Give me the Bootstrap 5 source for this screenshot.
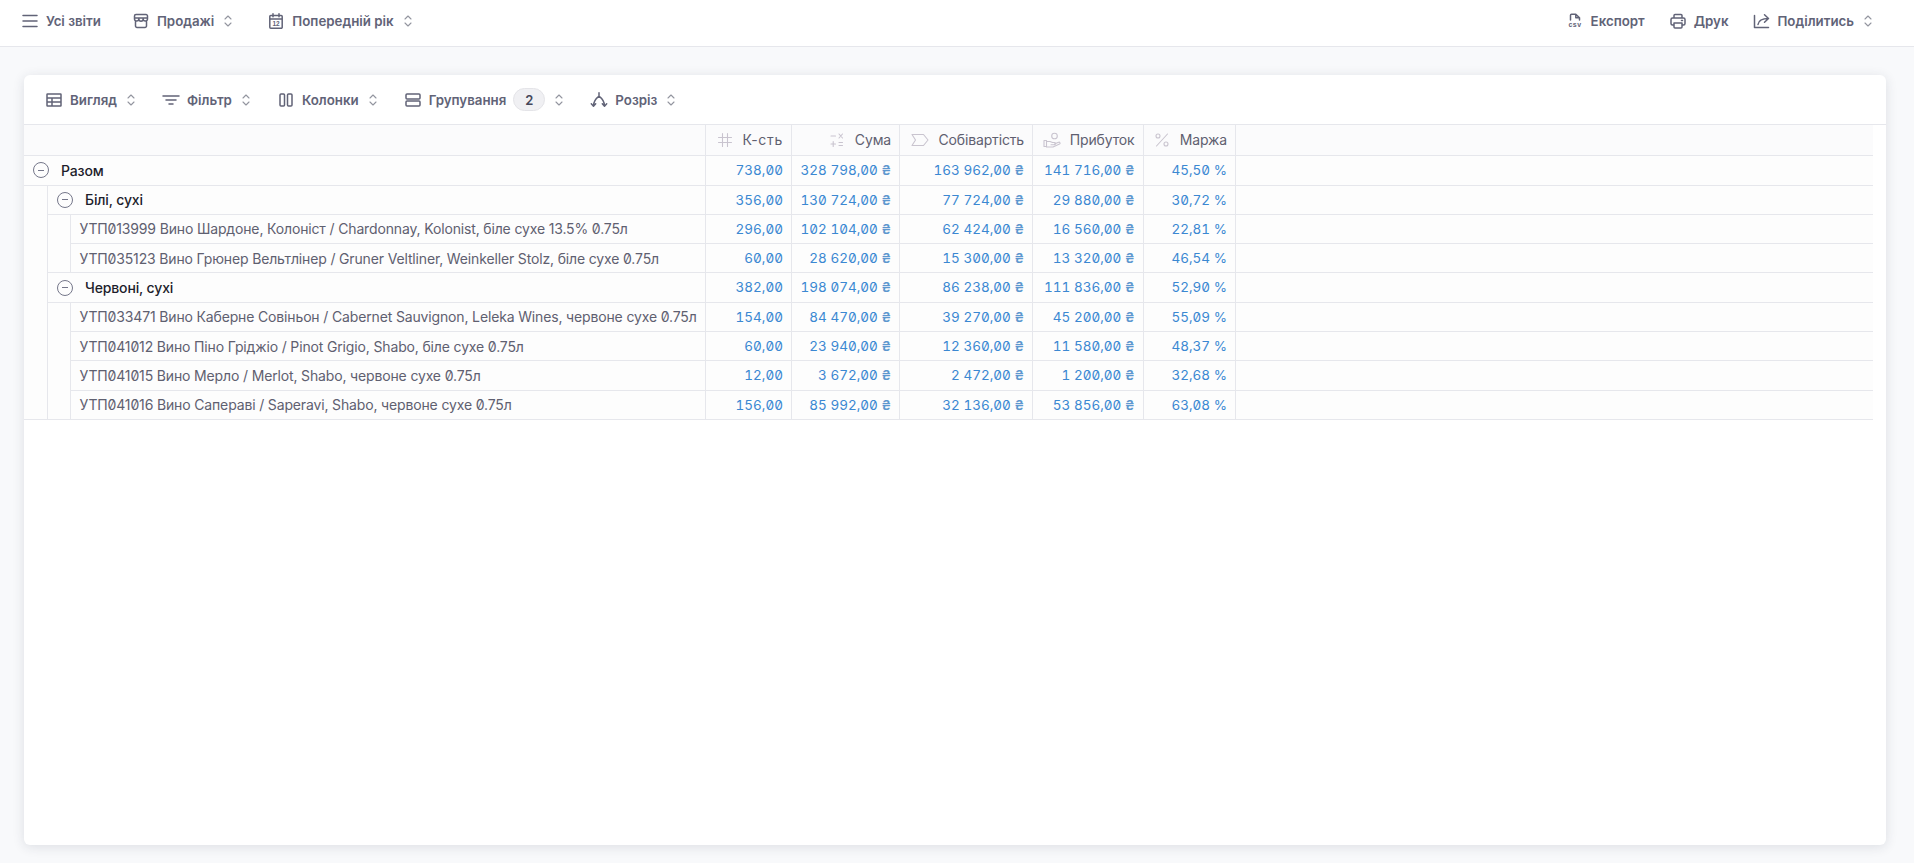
<!DOCTYPE html>
<html lang="uk">
<head>
    <meta charset="UTF-8">
    <title>Звіти</title>
    <link href="https://cdn.jsdelivr.net/npm/bootstrap@5.3.0/dist/css/bootstrap.min.css" rel="stylesheet">
    <style>
        body { background: #f8f9fb; font-family: Inter, "Liberation Sans", sans-serif; height: 863px; overflow: hidden; color: #5b5d70; }
        .top-strip { height: 47px; background: #fff; border-bottom: 1px solid #e6e7ec; padding: 0 42px 5px 21px; }
        .tool-btn { font-size: 13.3px; font-weight: 600; color: #616377; line-height: 18px; white-space: nowrap; }
        .tool-btn svg.ico { width: 18px; height: 18px; margin-right: 7px; flex: none; }
        .tool-btn svg.updown { width: 8px; height: 14px; margin-left: 10px; flex: none; color: #93959f; }
        .ico { fill: none; stroke: currentColor; stroke-width: 1.5; stroke-linecap: round; stroke-linejoin: round; }
        .ico text { fill: currentColor; stroke: none; font-family: "Liberation Sans", sans-serif; font-weight: 700; }
        .updown { fill: none; stroke: currentColor; stroke-width: 1.1; stroke-linecap: round; stroke-linejoin: round; }
        .gap-text { margin-left: 31px; }
        .gap-chevron { margin-left: 35px; }
        .gap-right { margin-left: 24px; }
        .gap-tools { margin-left: 27px; }
        .report-box { margin: 28px 28px 18px 24px; height: 770px; background: #fff; border-radius: 6px; box-shadow: 0 2px 12px rgba(40, 44, 70, .13); }
        .report-tools { height: 50px; border-bottom: 1px solid #e6e7ec; padding: 0 21px; }
        .count-pill { width: 32px; height: 23px; border-radius: 12px; background: #f0f0f3; border: 1px solid #e4e4e8; font-size: 13px; font-weight: 600; color: #45475a; margin-left: 7px; }
        .report-wrap { padding-right: 13px; }
        table.pivot { table-layout: fixed; width: 100%; border-collapse: collapse; font-size: 14px; letter-spacing: -.15px; color: #5f6070; }
        .pivot th, .pivot td { height: 29.3px; padding: 0 8px; border: 1px solid #e6e7ec; background: #fdfdfd; white-space: nowrap; font-weight: 400; vertical-align: middle; }
        .pivot tr > :first-child { border-left: 0; }
        .pivot tr > :last-child { border-right: 0; }
        .pivot thead tr > * { border-top: 0; height: 30px; background: #fbfbfc; }
        .pivot tr.total-row > * { height: 30px; }
        .pivot .num { text-align: right; color: #3b88d2; font-size: 13.5px; letter-spacing: 0; font-feature-settings: "tnum", "zero"; }
        .pivot .uah { font-weight: 600; color: #5d97cf; }
        .pivot .head-cell { text-align: right; color: #5f6070; }
        .pivot .head-in { display: flex; align-items: center; justify-content: flex-end; gap: 9px; }
        .pivot .head-in svg { width: 18px; height: 18px; color: #c9c4cf; flex: none; stroke-width: 1.1; }
        .pivot .wide-label { letter-spacing: .7px; }
        .pivot .group-name { font-weight: 500; color: #1d1e2c; padding-left: 9px; }
        .pivot .leaf-name { padding-left: 9px; font-feature-settings: "zero"; }
        .minus-dot { width: 16px; height: 16px; border-radius: 50%; border: 1px solid #75778a; margin-right: 12px; flex: none; }
        .minus-dot::after { content: ""; width: 6px; height: 1px; background: #75778a; }
    </style>
</head>
<body>

<svg width="0" height="0" class="d-block position-absolute">
    <symbol id="i-menu" viewBox="0 0 18 18"><path d="M2 3.500h14M2 9h14M2 14.500h14"/></symbol>
    <symbol id="i-store" viewBox="0 0 18 18"><path d="M4 2.500h10a1.500 1.500 0 0 1 1.500 1.500v2h-13V4A1.500 1.500 0 0 1 4 2.500zM2.500 6v1a2.170 2.170 0 0 0 4.330 0V6v1a2.170 2.170 0 0 0 4.340 0V6v1a2.170 2.170 0 0 0 4.330 0V6M3.500 9.500V14a1.500 1.500 0 0 0 1.500 1.500h8a1.500 1.500 0 0 0 1.500-1.500V9.500"/></symbol>
    <symbol id="i-print" viewBox="0 0 18 18"><path d="M5 13H3.500A1.500 1.500 0 0 1 2 11.500v-4A1.500 1.500 0 0 1 3.500 6h11A1.500 1.500 0 0 1 16 7.500v4a1.500 1.500 0 0 1-1.500 1.500H13M5 6V3.500a1 1 0 0 1 1-1h6a1 1 0 0 1 1 1V6M5 11h8v4a1 1 0 0 1-1 1H6a1 1 0 0 1-1-1zM12.500 8.500h1"/></symbol>
    <symbol id="i-share" viewBox="0 0 18 18"><path d="M2.500 3.500v12h14M6 12.500c.5-3.700 3.500-6 10.500-6M12.500 2.800l4 3.700-4 3.700"/></symbol>
    <symbol id="i-table" viewBox="0 0 18 18"><path d="M2.500 3h13a.5.5 0 0 1 .5.500v11a.5.5 0 0 1-.5.500h-13a.5.5 0 0 1-.5-.5v-11a.5.5 0 0 1 .5-.5zM2 7h14M2 11h14M7 7v8"/></symbol>
    <symbol id="i-filter" viewBox="0 0 18 18"><path d="M1 5h16M4 9h10M7 13h4"/></symbol>
    <symbol id="i-cols" viewBox="0 0 18 18"><rect x="3" y="3" width="4.500" height="12" rx="1"/><rect x="10.500" y="3" width="4.500" height="12" rx="1"/></symbol>
    <symbol id="i-rows" viewBox="0 0 18 18"><rect x="2" y="3" width="14" height="5" rx="1"/><rect x="2" y="10" width="14" height="5" rx="1"/></symbol>
    <symbol id="i-split" viewBox="0 0 18 18"><path d="M9 1.800v3.400M9 5.200C6 7.500 3.500 10 3.500 15M9 5.200c3 2.300 5.500 4.800 5.500 9.800M1.300 12.700l2.200 2.500 2.200-2.500M12.300 12.700l2.200 2.500 2.200-2.500"/></symbol>
    <symbol id="i-updown" viewBox="0 0 8 14"><path d="M1 5l3-3 3 3M1 9l3 3 3-3"/></symbol>
    <symbol id="h-hash" viewBox="0 0 18 18"><path d="M2.500 6.500h13M2.500 11.500h13M6.500 2.500v13M11.500 2.500v13"/></symbol>
    <symbol id="h-calc" viewBox="0 0 18 18"><path d="M3 5h4.500M11 3l3.500 4M14.500 3L11 7M5.200 10.500v5M3 13h4.500M11 11.500h3.500M11 14.500h3.500"/></symbol>
    <symbol id="h-tag" viewBox="0 0 18 18"><path d="M1 3.500h11.500l4.500 5.500-4.500 5.500H1l3.500-5.500z"/></symbol>
    <symbol id="h-hand" viewBox="0 0 18 18"><circle cx="11.500" cy="5" r="2.800"/><path d="M1 9.500h2.500v6H1zM3.500 10.500h3.500l2.500 1h2a1 1 0 0 1 0 2.200H8M11.500 13l4-1.700a1 1 0 0 1 1 1.800L10 16H3.500"/></symbol>
    <symbol id="h-pct" viewBox="0 0 18 18"><path d="M14.500 3L3.500 15"/><circle cx="5" cy="5" r="2"/><circle cx="13" cy="13" r="2"/></symbol>
</svg>

<div class="top-strip d-flex align-items-center justify-content-between">
    <div class="d-flex align-items-center">
        <div class="tool-btn d-flex align-items-center"><svg class="ico"><use href="#i-menu"/></svg>Усі звіти</div>
        <div class="tool-btn d-flex align-items-center gap-text"><svg class="ico"><use href="#i-store"/></svg>Продажі<svg class="updown"><use href="#i-updown"/></svg></div>
        <div class="tool-btn d-flex align-items-center gap-chevron">
            <svg class="ico" viewBox="0 0 18 18"><path d="M3.800 3.500h10.400a1 1 0 0 1 1 1v10.700a1 1 0 0 1-1 1H3.800a1 1 0 0 1-1-1V4.500a1 1 0 0 1 1-1zM2.800 7h12.400M6 1.800v3M12 1.800v3"/><text x="9" y="14.300" font-size="6.500" text-anchor="middle">12</text></svg>Попередній рік<svg class="updown"><use href="#i-updown"/></svg>
        </div>
    </div>
    <div class="d-flex align-items-center">
        <div class="tool-btn d-flex align-items-center">
            <svg class="ico" viewBox="0 0 18 18"><path d="M4.500 8V3.200a1 1 0 0 1 1-1h4.300l3.700 3.500V8M9.800 2.200v3.500h3.700"/><text x="9" y="15" font-size="7" text-anchor="middle" letter-spacing=".5">csv</text></svg>Експорт
        </div>
        <div class="tool-btn d-flex align-items-center gap-right"><svg class="ico"><use href="#i-print"/></svg>Друк</div>
        <div class="tool-btn d-flex align-items-center gap-right"><svg class="ico"><use href="#i-share"/></svg>Поділитись<svg class="updown"><use href="#i-updown"/></svg></div>
    </div>
</div>

<div class="report-box">
    <div class="report-tools d-flex align-items-center">
        <div class="tool-btn d-flex align-items-center"><svg class="ico"><use href="#i-table"/></svg>Вигляд<svg class="updown"><use href="#i-updown"/></svg></div>
        <div class="tool-btn d-flex align-items-center gap-tools"><svg class="ico"><use href="#i-filter"/></svg>Фільтр<svg class="updown"><use href="#i-updown"/></svg></div>
        <div class="tool-btn d-flex align-items-center gap-tools"><svg class="ico"><use href="#i-cols"/></svg>Колонки<svg class="updown"><use href="#i-updown"/></svg></div>
        <div class="tool-btn d-flex align-items-center gap-tools"><svg class="ico"><use href="#i-rows"/></svg>Групування<span class="count-pill d-flex align-items-center justify-content-center">2</span><svg class="updown"><use href="#i-updown"/></svg></div>
        <div class="tool-btn d-flex align-items-center gap-tools"><svg class="ico"><use href="#i-split"/></svg>Розріз<svg class="updown"><use href="#i-updown"/></svg></div>
    </div>
    <div class="report-wrap">
        <table class="pivot">
            <colgroup>
                <col style="width:23.5px"><col style="width:22.5px"><col style="width:635px">
                <col style="width:86.5px"><col style="width:108px"><col style="width:133px"><col style="width:110.5px"><col style="width:92.5px"><col>
            </colgroup>
            <thead>
                <tr>
                    <th colspan="3"></th>
                    <th class="head-cell"><div class="head-in"><svg class="ico"><use href="#h-hash"/></svg><span class="wide-label">К-сть</span></div></th>
                    <th class="head-cell"><div class="head-in"><svg class="ico"><use href="#h-calc"/></svg>Сума</div></th>
                    <th class="head-cell"><div class="head-in"><svg class="ico"><use href="#h-tag"/></svg>Собівартість</div></th>
                    <th class="head-cell"><div class="head-in"><svg class="ico"><use href="#h-hand"/></svg>Прибуток</div></th>
                    <th class="head-cell"><div class="head-in"><svg class="ico"><use href="#h-pct"/></svg>Маржа</div></th>
                    <th></th>
                </tr>
            </thead>
            <tbody>
                <tr class="total-row">
                    <td colspan="3" class="group-name"><div class="d-flex align-items-center"><span class="minus-dot d-inline-flex align-items-center justify-content-center"></span>Разом</div></td>
                    <td class="num">738,00</td><td class="num">328 798,00 <span class="uah">₴</span></td><td class="num">163 962,00 <span class="uah">₴</span></td><td class="num">141 716,00 <span class="uah">₴</span></td><td class="num">45,50 %</td><td></td>
                </tr>
                <tr>
                    <td rowspan="8"></td>
                    <td colspan="2" class="group-name"><div class="d-flex align-items-center"><span class="minus-dot d-inline-flex align-items-center justify-content-center"></span>Білі, сухі</div></td>
                    <td class="num">356,00</td><td class="num">130 724,00 <span class="uah">₴</span></td><td class="num">77 724,00 <span class="uah">₴</span></td><td class="num">29 880,00 <span class="uah">₴</span></td><td class="num">30,72 %</td><td></td>
                </tr>
                <tr>
                    <td rowspan="2"></td>
                    <td class="leaf-name">УТП013999 Вино Шардоне, Колоніст / Chardonnay, Kolonist, біле сухе 13.5% 0.75л</td>
                    <td class="num">296,00</td><td class="num">102 104,00 <span class="uah">₴</span></td><td class="num">62 424,00 <span class="uah">₴</span></td><td class="num">16 560,00 <span class="uah">₴</span></td><td class="num">22,81 %</td><td></td>
                </tr>
                <tr>
                    <td class="leaf-name">УТП035123 Вино Грюнер Вельтлінер / Gruner Veltliner, Weinkeller Stolz, біле сухе 0.75л</td>
                    <td class="num">60,00</td><td class="num">28 620,00 <span class="uah">₴</span></td><td class="num">15 300,00 <span class="uah">₴</span></td><td class="num">13 320,00 <span class="uah">₴</span></td><td class="num">46,54 %</td><td></td>
                </tr>
                <tr>
                    <td colspan="2" class="group-name"><div class="d-flex align-items-center"><span class="minus-dot d-inline-flex align-items-center justify-content-center"></span>Червоні, сухі</div></td>
                    <td class="num">382,00</td><td class="num">198 074,00 <span class="uah">₴</span></td><td class="num">86 238,00 <span class="uah">₴</span></td><td class="num">111 836,00 <span class="uah">₴</span></td><td class="num">52,90 %</td><td></td>
                </tr>
                <tr>
                    <td rowspan="4"></td>
                    <td class="leaf-name">УТП033471 Вино Каберне Совіньон / Cabernet Sauvignon, Leleka Wines, червоне сухе 0.75л</td>
                    <td class="num">154,00</td><td class="num">84 470,00 <span class="uah">₴</span></td><td class="num">39 270,00 <span class="uah">₴</span></td><td class="num">45 200,00 <span class="uah">₴</span></td><td class="num">55,09 %</td><td></td>
                </tr>
                <tr>
                    <td class="leaf-name">УТП041012 Вино Піно Гріджіо / Pinot Grigio, Shabo, біле сухе 0.75л</td>
                    <td class="num">60,00</td><td class="num">23 940,00 <span class="uah">₴</span></td><td class="num">12 360,00 <span class="uah">₴</span></td><td class="num">11 580,00 <span class="uah">₴</span></td><td class="num">48,37 %</td><td></td>
                </tr>
                <tr>
                    <td class="leaf-name">УТП041015 Вино Мерло / Merlot, Shabo, червоне сухе 0.75л</td>
                    <td class="num">12,00</td><td class="num">3 672,00 <span class="uah">₴</span></td><td class="num">2 472,00 <span class="uah">₴</span></td><td class="num">1 200,00 <span class="uah">₴</span></td><td class="num">32,68 %</td><td></td>
                </tr>
                <tr>
                    <td class="leaf-name">УТП041016 Вино Сапераві / Saperavi, Shabo, червоне сухе 0.75л</td>
                    <td class="num">156,00</td><td class="num">85 992,00 <span class="uah">₴</span></td><td class="num">32 136,00 <span class="uah">₴</span></td><td class="num">53 856,00 <span class="uah">₴</span></td><td class="num">63,08 %</td><td></td>
                </tr>
            </tbody>
        </table>
    </div>
</div>

<script src="https://cdn.jsdelivr.net/npm/bootstrap@5.3.0/dist/js/bootstrap.bundle.min.js"></script>
</body>
</html>
